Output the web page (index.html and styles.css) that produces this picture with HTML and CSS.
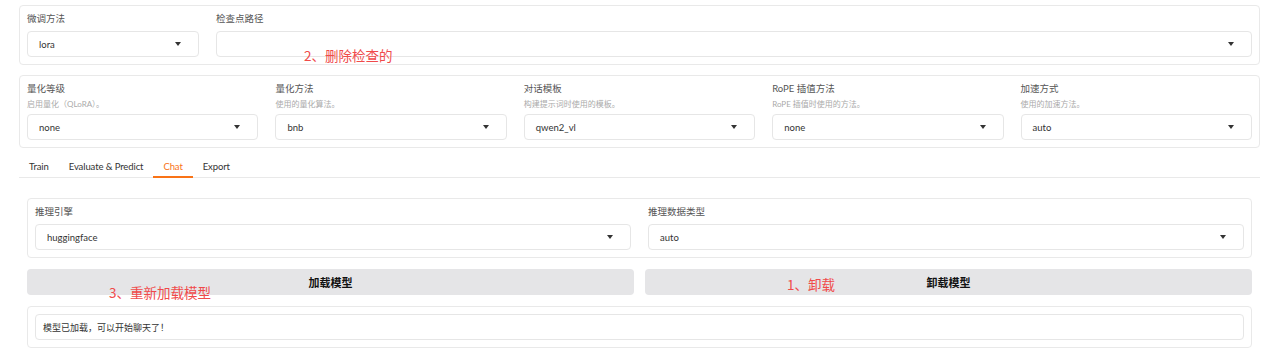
FILE: index.html
```html
<!DOCTYPE html>
<html lang="zh">
<head>
    <meta charset="UTF-8">
    <meta name="viewport" content="width=device-width, initial-scale=1.0">
    <title>LLaMA Board - Chat</title>
    <link rel="stylesheet" href="styles.css">
</head>
<body>
    <div class="page">
        <div class="panel row-model">
            <div class="field">
                <div class="label">微调方法</div>
                <div class="select"><span>lora</span><i class="caret"></i></div>
            </div>
            <div class="field">
                <div class="label">检查点路径</div>
                <div class="select"><span></span><i class="caret"></i></div>
            </div>
        </div>

        <div class="panel row-quant">
            <div class="field">
                <div class="label">量化等级</div>
                <div class="info">启用量化（QLoRA）。</div>
                <div class="select"><span>none</span><i class="caret"></i></div>
            </div>
            <div class="field">
                <div class="label">量化方法</div>
                <div class="info">使用的量化算法。</div>
                <div class="select"><span>bnb</span><i class="caret"></i></div>
            </div>
            <div class="field">
                <div class="label">对话模板</div>
                <div class="info">构建提示词时使用的模板。</div>
                <div class="select"><span>qwen2_vl</span><i class="caret"></i></div>
            </div>
            <div class="field">
                <div class="label">RoPE 插值方法</div>
                <div class="info">RoPE 插值时使用的方法。</div>
                <div class="select"><span>none</span><i class="caret"></i></div>
            </div>
            <div class="field">
                <div class="label">加速方式</div>
                <div class="info">使用的加速方法。</div>
                <div class="select"><span>auto</span><i class="caret"></i></div>
            </div>
        </div>

        <div class="tabs">
            <button class="tab">Train</button>
            <button class="tab">Evaluate &amp; Predict</button>
            <button class="tab active">Chat</button>
            <button class="tab">Export</button>
        </div>

        <div class="tab-body">
            <div class="panel row-infer">
                <div class="field">
                    <div class="label">推理引擎</div>
                    <div class="select"><span>huggingface</span><i class="caret"></i></div>
                </div>
                <div class="field">
                    <div class="label">推理数据类型</div>
                    <div class="select"><span>auto</span><i class="caret"></i></div>
                </div>
            </div>

            <div class="btn-row">
                <button class="btn">加载模型</button>
                <button class="btn">卸载模型</button>
            </div>

            <div class="panel">
                <div class="textbox">模型已加载，可以开始聊天了！</div>
            </div>
        </div>

        <!-- annotations drawn over the screenshot -->
        <div class="note note-2">2、删除检查的</div>
        <div class="note note-3">3、重新加载模型</div>
        <div class="note note-1">1、卸载</div>
    </div>
</body>
</html>
```

FILE: styles.css
```css
* {
    margin: 0;
    padding: 0;
    box-sizing: border-box;
}

body {
    background: #fff;
    font-family: Lato, "Noto Sans CJK SC", sans-serif;
    color: #333;
    overflow: hidden;
}

.page {
    position: relative;
    padding: 5px 20px 0 19px;
}

.panel {
    border: 1px solid #e9e9e9;
    border-radius: 4px;
    padding: 5px 7px 7px;
    background: #fff;
}

.row-model {
    display: grid;
    grid-template-columns: 172px 1fr;
    gap: 17px;
}

.row-quant {
    margin-top: 10px;
    display: grid;
    grid-template-columns: repeat(5, 1fr);
    gap: 17px;
    padding-bottom: 7px;
}

.row-infer {
    display: grid;
    grid-template-columns: 1fr 1fr;
    gap: 17px;
}

.label {
    font-size: 9.5px;
    line-height: 16px;
    color: #555;
    margin-bottom: 4px;
}

.row-quant .label {
    margin-bottom: 0;
}

.info {
    font-size: 8px;
    line-height: 14px;
    color: #aaa;
    margin-bottom: 3px;
}

.select {
    height: 26px;
    border: 1px solid #e6e6e6;
    border-radius: 4px;
    display: flex;
    align-items: center;
    justify-content: space-between;
    padding: 0 17px 0 11px;
    font-size: 9.5px;
    color: #333;
}

.caret {
    width: 0;
    height: 0;
    border-left: 3px solid transparent;
    border-right: 3px solid transparent;
    border-top: 4px solid #333;
}

.tabs {
    margin-top: 10px;
    display: flex;
    border-bottom: 1px solid #e9e9e9;
}

.tab {
    background: none;
    border: none;
    border-bottom: 2px solid transparent;
    margin-bottom: -1px;
    padding: 0 10px;
    height: 20px;
    line-height: 18px;
    font-family: Lato, sans-serif;
    font-size: 9.5px;
    letter-spacing: -0.1px;
    color: #333;
    cursor: pointer;
}

.tab.active {
    color: #f97316;
    border-bottom-color: #f97316;
}

.tab-body {
    padding: 20px 8px 0;
    display: flex;
    flex-direction: column;
    gap: 11px;
}

.btn-row {
    display: grid;
    grid-template-columns: 1fr 1fr;
    gap: 11px;
}

.btn {
    height: 26px;
    border: none;
    border-radius: 4px;
    background: #e5e5e7;
    font-family: Lato, "Noto Sans CJK SC", sans-serif;
    font-size: 11px;
    font-weight: bold;
    color: #111;
    cursor: pointer;
}

.textbox {
    height: 26px;
    margin-top: 2px;
    border: 1px solid #e6e6e6;
    border-radius: 4px;
    padding: 0 7px;
    display: flex;
    align-items: center;
    font-size: 9px;
    color: #333;
}

.note {
    position: absolute;
    font-family: "Noto Sans CJK SC", sans-serif;
    font-size: 13.5px;
    line-height: 18px;
    color: #f04a4a;
    white-space: nowrap;
}

.note-2 {
    left: 304px;
    top: 46px;
}

.note-3 {
    left: 109px;
    top: 283px;
}

.note-1 {
    left: 787px;
    top: 275px;
}
```
